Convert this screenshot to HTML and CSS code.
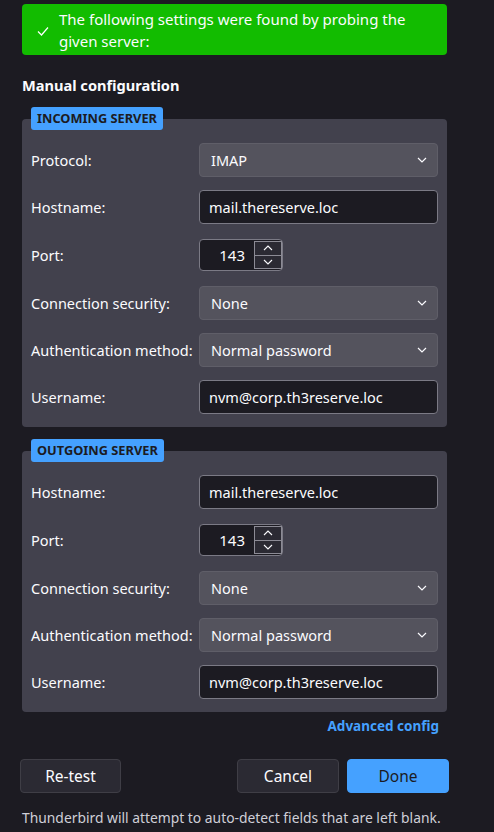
FILE: index.html
```html
<!DOCTYPE html>
<html lang="en">
<head>
<meta charset="utf-8">
<title>Manual configuration</title>
<link rel="stylesheet" href="styles.css">
</head>
<body>
<div class="page">
  <div class="banner">
    <svg class="check" width="12" height="10" viewBox="0 0 12 10"><path d="M1 5.5 L4.5 9 L11 1.5" fill="none" stroke="#fff" stroke-width="1.2"/></svg>
    <p class="banner-text">The following settings were found by probing the given server:</p>
  </div>

  <h2 class="title">Manual configuration</h2>

  <section class="group">
    <div class="badge">INCOMING SERVER</div>
    <div class="row"><span class="label">Protocol:</span><div class="select">IMAP<svg class="chev" width="10" height="6" viewBox="0 0 10 6"><path d="M1 1 L5 5 L9 1" fill="none" stroke="#fbfbfe" stroke-width="1.2"/></svg></div></div>
    <div class="row"><span class="label">Hostname:</span><div class="input">mail.thereserve.loc</div></div>
    <div class="row port-row"><span class="label">Port:</span>
      <div class="port"><span class="port-val">143</span><div class="spin"><span class="spin-btn"><svg width="10" height="6" viewBox="0 0 10 6"><path d="M1 5 L5 1 L9 5" fill="none" stroke="#fbfbfe" stroke-width="1.1"/></svg></span><span class="spin-btn"><svg width="10" height="6" viewBox="0 0 10 6"><path d="M1 1 L5 5 L9 1" fill="none" stroke="#fbfbfe" stroke-width="1.1"/></svg></span></div></div>
    </div>
    <div class="row"><span class="label">Connection security:</span><div class="select">None<svg class="chev" width="10" height="6" viewBox="0 0 10 6"><path d="M1 1 L5 5 L9 1" fill="none" stroke="#fbfbfe" stroke-width="1.2"/></svg></div></div>
    <div class="row"><span class="label">Authentication method:</span><div class="select">Normal password<svg class="chev" width="10" height="6" viewBox="0 0 10 6"><path d="M1 1 L5 5 L9 1" fill="none" stroke="#fbfbfe" stroke-width="1.2"/></svg></div></div>
    <div class="row"><span class="label">Username:</span><div class="input">nvm@corp.th3reserve.loc</div></div>
  </section>

  <section class="group">
    <div class="badge">OUTGOING SERVER</div>
    <div class="row"><span class="label">Hostname:</span><div class="input">mail.thereserve.loc</div></div>
    <div class="row port-row"><span class="label">Port:</span>
      <div class="port"><span class="port-val">143</span><div class="spin"><span class="spin-btn"><svg width="10" height="6" viewBox="0 0 10 6"><path d="M1 5 L5 1 L9 5" fill="none" stroke="#fbfbfe" stroke-width="1.1"/></svg></span><span class="spin-btn"><svg width="10" height="6" viewBox="0 0 10 6"><path d="M1 1 L5 5 L9 1" fill="none" stroke="#fbfbfe" stroke-width="1.1"/></svg></span></div></div>
    </div>
    <div class="row"><span class="label">Connection security:</span><div class="select">None<svg class="chev" width="10" height="6" viewBox="0 0 10 6"><path d="M1 1 L5 5 L9 1" fill="none" stroke="#fbfbfe" stroke-width="1.2"/></svg></div></div>
    <div class="row"><span class="label">Authentication method:</span><div class="select">Normal password<svg class="chev" width="10" height="6" viewBox="0 0 10 6"><path d="M1 1 L5 5 L9 1" fill="none" stroke="#fbfbfe" stroke-width="1.2"/></svg></div></div>
    <div class="row"><span class="label">Username:</span><div class="input">nvm@corp.th3reserve.loc</div></div>
  </section>

  <div class="advanced"><a class="link" href="#">Advanced config</a></div>

  <div class="buttons">
    <button class="btn">Re-test</button>
    <div class="spacer"></div>
    <button class="btn">Cancel</button>
    <button class="btn primary">Done</button>
  </div>

  <p class="hint">Thunderbird will attempt to auto-detect fields that are left blank.</p>
</div>
</body>
</html>
```
FILE: styles.css
```css
* { box-sizing: border-box; }
html, body { margin: 0; padding: 0; }
body {
  background: #1c1b22;
  color: #fbfbfe;
  font-family: "Noto Sans", "DejaVu Sans", sans-serif;
  font-size: 15px;
  width: 494px;
  height: 832px;
  overflow: hidden;
}
.page {
  padding: 4px 0 0 22px;
  width: 447px;
}
.banner {
  background: #12bc00;
  border-radius: 4px;
  height: 51px;
  display: flex;
  align-items: center;
  padding: 0 10px 0 15px;
}
.check { flex: none; margin-right: 10px; margin-top: 2px; }
.banner-text {
  margin: 0;
  font-size: 15px;
  line-height: 22px;
  color: #fbfbfe;
}
.title {
  margin: 19px 0 0;
  font-size: 14.6px;
  font-weight: 700;
  line-height: 22px;
}
.group {
  background: #42414d;
  border-radius: 4px;
  margin-top: 23px;
  padding: 0 9px 13px;
  display: flex;
  flex-direction: column;
  gap: 13px;
}
.group + .group { margin-top: 24px; }
.badge {
  align-self: flex-start;
  margin-top: -12px;
  height: 23px;
  line-height: 23px;
  padding: 0 6px;
  background: #45a1ff;
  color: #1c1b22;
  font-size: 12.8px;
  font-weight: 700;
  border-radius: 3px;
}
.row {
  display: flex;
  align-items: center;
  height: 34px;
}
.port-row { height: 36px; }
.label {
  width: 168px;
  flex: none;
  font-size: 14.5px;
}
.select, .input {
  width: 239px;
  height: 34px;
  border-radius: 4px;
  display: flex;
  align-items: center;
  font-size: 14.5px;
}
.select {
  background: #54535d;
  border: 1px solid #5f5e68;
  padding: 0 10px 0 11px;
  justify-content: space-between;
}
.chev { flex: none; }
.input {
  background: #1c1b22;
  border: 1px solid #7b7a85;
  padding: 0 9px;
}
.port {
  width: 84px;
  height: 32px;
  background: #1c1b22;
  border: 1px solid #7b7a85;
  border-radius: 4px;
  display: flex;
  align-items: center;
}
.port-val {
  width: 54px;
  text-align: right;
  padding-right: 9px;
  font-size: 15px;
}
.spin {
  width: 28px;
  height: 28px;
  display: flex;
  flex-direction: column;
  border: 1px solid #8c8b95;
  background: #2b2a33;
}
.spin-btn {
  flex: 1;
  display: flex;
  align-items: center;
  justify-content: center;
}
.spin-btn + .spin-btn { border-top: 1px solid #8c8b95; }
.advanced {
  display: flex;
  justify-content: flex-end;
  padding-right: 8px;
  margin-top: 3px;
  line-height: 22px;
}
.link {
  color: #45a1ff;
  font-weight: 700;
  font-size: 13.5px;
  text-decoration: none;
}
.buttons {
  display: flex;
  gap: 8px;
  margin: 22px 0 0 -2px;
  width: 429px;
}
.spacer { flex: 1; }
.btn {
  height: 34px;
  width: 102px;
  border-radius: 4px;
  background: #2b2a33;
  border: 1px solid #3f3e46;
  color: #fbfbfe;
  font-family: "Noto Sans", "DejaVu Sans", sans-serif;
  font-size: 15.5px;
  padding: 0;
}
.btn:first-child { width: 101px; }
.btn.primary {
  background: #45a1ff;
  border-color: #45a1ff;
  color: #1c1b22;
}
.hint {
  margin: 16px 0 0;
  font-size: 13.85px;
  line-height: 18px;
  color: #cfcfd8;
}
```
